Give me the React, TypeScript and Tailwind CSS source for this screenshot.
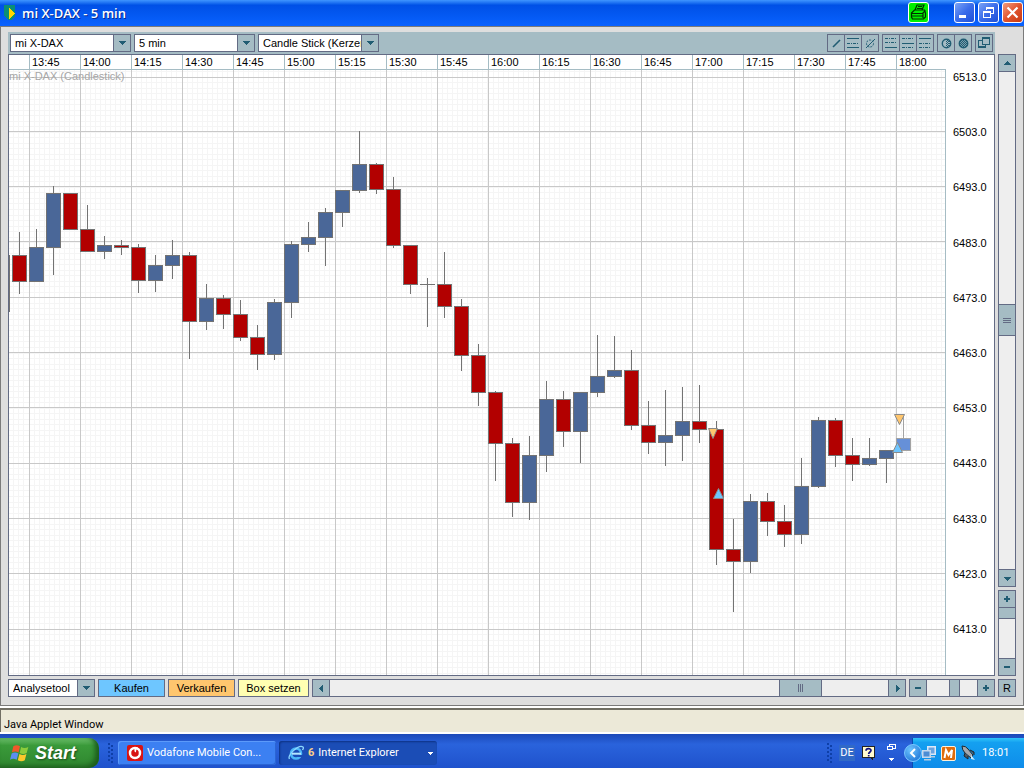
import React from "react";

type Kind = "up" | "down" | "live";
type Candle = [x: number, high: number, top: number, bottom: number, low: number, kind: Kind];

const CANDLES: Candle[] = [
  [2, 255, 255, 312, 312, "up"],
  [19, 232, 255, 282, 294, "down"],
  [36, 229, 247, 282, 282, "up"],
  [53, 186, 193, 248, 275, "up"],
  [70, 193, 193, 230, 230, "down"],
  [87, 205, 229, 252, 252, "down"],
  [104, 236, 245, 252, 259, "up"],
  [121, 240, 245, 248, 255, "down"],
  [138, 244, 247, 281, 293, "down"],
  [155, 255, 265, 281, 292, "up"],
  [172, 240, 255, 266, 279, "up"],
  [189, 252, 255, 322, 359, "down"],
  [206, 284, 298, 322, 330, "up"],
  [223, 295, 298, 315, 329, "down"],
  [240, 300, 314, 338, 341, "down"],
  [257, 325, 337, 355, 370, "down"],
  [274, 299, 302, 355, 360, "up"],
  [291, 241, 244, 303, 318, "up"],
  [308, 222, 237, 245, 252, "up"],
  [325, 208, 212, 238, 266, "up"],
  [342, 190, 190, 213, 227, "up"],
  [359, 131, 164, 191, 193, "up"],
  [376, 163, 164, 190, 194, "down"],
  [393, 177, 189, 246, 248, "down"],
  [410, 245, 245, 285, 294, "down"],
  [427, 278, 284, 285, 327, "down"],
  [444, 252, 284, 307, 318, "down"],
  [461, 299, 306, 356, 371, "down"],
  [478, 344, 355, 393, 406, "down"],
  [495, 391, 392, 444, 481, "down"],
  [512, 438, 443, 503, 517, "down"],
  [529, 436, 455, 503, 520, "up"],
  [546, 381, 399, 456, 472, "up"],
  [563, 391, 399, 432, 447, "down"],
  [580, 392, 392, 432, 463, "up"],
  [597, 335, 376, 393, 397, "up"],
  [614, 336, 370, 377, 378, "up"],
  [631, 350, 370, 426, 430, "down"],
  [648, 401, 425, 443, 454, "down"],
  [665, 390, 435, 443, 466, "up"],
  [682, 387, 421, 436, 461, "up"],
  [699, 385, 421, 430, 443, "down"],
  [716, 421, 429, 550, 565, "down"],
  [733, 519, 549, 562, 612, "down"],
  [750, 494, 501, 562, 573, "up"],
  [767, 493, 501, 522, 536, "down"],
  [784, 505, 521, 535, 547, "down"],
  [801, 458, 486, 535, 544, "up"],
  [818, 417, 420, 487, 488, "up"],
  [835, 418, 420, 456, 467, "down"],
  [852, 438, 455, 465, 481, "down"],
  [869, 438, 458, 465, 466, "up"],
  [886, 450, 450, 459, 483, "up"],
  [903, 416, 438, 451, 451, "live"],
];

const FILL: Record<Kind, string> = { up: "#4a6798", down: "#b20000", live: "#6690d8" };
const LINE: Record<Kind, string> = { up: "#737373", down: "#737373", live: "#a3a3a3" };

const TIMES = [
  "13:45", "14:00", "14:15", "14:30", "14:45", "15:00", "15:15", "15:30", "15:45",
  "16:00", "16:15", "16:30", "16:45", "17:00", "17:15", "17:30", "17:45", "18:00",
];
const PRICES = Array.from({ length: 11 }, (_, i) => (6513 - i * 10).toFixed(1));
const MAJOR_Y = [77, 131, 186, 241, 297, 352, 407, 463, 518, 573, 629];
const MAJOR_X = TIMES.map((_, i) => 29 + i * 51);
const MINOR_X = Array.from({ length: 184 }, (_, i) => Math.floor(29 + (i - 3) * 5.1));
const MINOR_Y = Array.from({ length: 112 }, (_, i) => Math.floor(77 + (i - 1) * 5.52));

function Plot() {
  return (
    <svg className="block min-h-[605px] w-full flex-1" shapeRendering="crispEdges" role="img" aria-label="mi X-DAX (Candlestick)">
      <g transform="translate(-9 -70)">
        {MINOR_X.map((x, i) => (
          <rect key={i} x={x} y={70} width={1} height={1200} fill="#f5f5f5" />
        ))}
        {MINOR_Y.map((y, i) => (
          <rect key={i} x={9} y={y} width={2400} height={1} fill="#f5f5f5" />
        ))}
        {MAJOR_X.map((x) => (
          <rect key={x} x={x} y={70} width={1} height={1200} fill="#c8c8c8" />
        ))}
        {MAJOR_Y.map((y) => (
          <rect key={y} x={9} y={y} width={2400} height={1} fill="#c8c8c8" />
        ))}
        <text x={9} y={80} fontSize={11} fill="#a6a6a6">mi X-DAX (Candlestick)</text>
        {CANDLES.map(([x, high, top, bottom, low, kind]) => (
          <g key={x}>
            <rect x={x} y={high} width={1} height={low - high} fill={LINE[kind]} />
            <rect x={x - 7} y={top} width={15} height={bottom - top} fill={LINE[kind]} />
            {bottom - top > 2 && (
              <rect x={x - 6} y={top + 1} width={13} height={bottom - top - 2} fill={FILL[kind]} />
            )}
          </g>
        ))}
        <g stroke="#8a8a8a" strokeWidth={1} shapeRendering="auto">
          <path d="M708.5 428.5h9l-4.500 10z" fill="#ffc66e" />
          <path d="M894.5 414.500h10l-5 10z" fill="#ffc66e" />
          <path d="M713.500 498.500h10l-5-10z" fill="#6ec6ff" />
          <path d="M892.500 452.500h10l-5-10z" fill="#6ec6ff" />
        </g>
      </g>
    </svg>
  );
}

function Dropdown({ label, text, className }: { label: string; text: string; className: string }) {
  return (
    <label className={`grid h-[18px] grid-cols-[minmax(0,1fr)_17px] border border-[#636b84] bg-white ${className}`}>
      <select
        aria-label={label}
        className="col-span-2 col-start-1 row-start-1 h-4 w-full appearance-none overflow-hidden bg-transparent pr-[17px] pl-1 text-[11px] leading-4 text-black outline-none"
      >
        <option>{text}</option>
      </select>
      <span className="pointer-events-none col-start-2 row-start-1 flex items-center justify-center border-l border-[#636b84] bg-[#a5bcc4]">
        <svg width="8" height="4" shapeRendering="crispEdges"><path d="M1 0h7v1H1zM2 1h5v1H2zM3 2h3v1H3zM4 3h1v1H4z" fill="#215d73" /></svg>
      </span>
    </label>
  );
}

const GLYPH: Record<string, string> = {
  up: "M4 2h1v1H4zM3 3h3v1H3zM2 4h5v1H2zM1 5h7v1H1z",
  down: "M1 3h7v1H1zM2 4h5v1H2zM3 5h3v1H3zM4 6h1v1H4z",
  left: "M5 1h1v7H5zM4 2h1v5H4zM3 3h1v3H3zM2 4h1v1H2z",
  right: "M3 1h1v7H3zM4 2h1v5H4zM5 3h1v3H5zM6 4h1v1H6z",
  plus: "M1 3h6v2H1zM3 1h2v6H3z",
  minus: "M1 3h6v2H1z",
};

function Key({ glyph, label }: { glyph: string; label: string }) {
  return (
    <button aria-label={label} className="flex size-[18px] shrink-0 items-center justify-center border border-[#636b84] bg-[#a5bcc4]">
      <svg width="8" height="8" shapeRendering="crispEdges"><path d={GLYPH[glyph]} fill="#215d73" /></svg>
    </button>
  );
}

function Tool({ label, children }: { label: string; children: React.ReactNode }) {
  return (
    <button aria-label={label} className="-ml-px flex size-[18px] items-center justify-center border border-[#636b84] bg-[#a5bcc4] first:ml-0">
      <svg width="16" height="16" className="shrink-0" shapeRendering="crispEdges" stroke="#215d73" fill="none">{children}</svg>
    </button>
  );
}

const solid = (y: number) => <path d={`M2 ${y}.5h12`} />;
const dash = (y: number) => <path d={`M2 ${y}.5h12`} strokeDasharray="3 1 1 1" />;

function Toolbar() {
  return (
    <div className="flex h-[22px] items-center gap-[3px] bg-[#a5bcc4] px-[2px]">
      <Dropdown label="Instrument" text="mi X-DAX" className="w-[121px]" />
      <Dropdown label="Intervall" text="5 min" className="w-[121px]" />
      <Dropdown label="Darstellung" text="Candle Stick (Kerzen)" className="w-[121px]" />
      <div className="ml-auto flex">
        <Tool label="Linie"><path d="M5 12l7-7" strokeWidth="1.600" shapeRendering="auto" /></Tool>
        <Tool label="Parallelen">{solid(3)}{dash(8)}{solid(12)}</Tool>
        <Tool label="Ellipse">
          <circle cx="8" cy="8.500" r="3.500" strokeDasharray="2 1" shapeRendering="auto" />
          <path d="M4 13l9-9" shapeRendering="auto" />
        </Tool>
      </div>
      <div className="flex">
        <Tool label="Linie unten">{dash(3)}{dash(7)}{solid(12)}</Tool>
        <Tool label="Linie Mitte">{dash(3)}{solid(8)}{dash(12)}</Tool>
        <Tool label="Linie oben">{solid(3)}{dash(8)}{dash(12)}</Tool>
      </div>
      <div className="flex">
        <Tool label="Halb">
          <circle cx="8.500" cy="8.500" r="4.200" strokeWidth="1.400" shapeRendering="auto" />
          <path d="M9.500 5v7M11.500 6v5" strokeDasharray="1 1" /><path d="M8.500 4v9M10.500 4v8" strokeDasharray="1 1" />
        </Tool>
        <Tool label="Voll">
          <circle cx="8.500" cy="8.500" r="4.200" strokeWidth="1.400" fill="#215d73" fillOpacity="0.300" shapeRendering="auto" />
          <path d="M5.500 6v5M7.500 4v9M9.500 4v9M11.500 6v5" strokeDasharray="1 1" />
          <path d="M6.500 5v7M8.500 5v7M10.500 5v7" strokeDasharray="1 1" />
        </Tool>
      </div>
      <div className="flex">
        <Tool label="Fenster abdocken">
          <path d="M6.500 2.500h7v7h-7zM6.500 5.500h-4v7h7v-3" /><path d="M6.500 3.500h7M2.500 11.500h7" />
        </Tool>
      </div>
    </div>
  );
}

function Chart() {
  return (
    <div className="flex min-w-0 border border-[#636b84] bg-white">
      <div className="flex min-w-0 flex-1 flex-col">
        <div className="flex h-[15px] overflow-hidden border-b border-[#a5bcc4] text-[11px] leading-[14px]">
          <span className="w-5 shrink-0" />
          {TIMES.map((t) => (
            <span key={t} className="w-[51px] shrink-0 border-l border-[#a5bcc4] pl-[2px]">{t}</span>
          ))}
        </div>
        <div className="flex flex-1 flex-col border-r border-[#a5bcc4]"><Plot /></div>
      </div>
      <div className="flex h-[581px] w-12 shrink-0 flex-col justify-between pt-[15px] pl-[7px] text-[11px] leading-[14px]">
        {PRICES.map((p) => (
          <span key={p}>{p}</span>
        ))}
      </div>
    </div>
  );
}

function SideBars() {
  return (
    <div className="flex w-[18px] flex-col gap-[3px]">
      <div className="flex flex-1 flex-col bg-[#eee]">
        <Key glyph="up" label="Nach oben" />
        <div className="grow-[232] border-x border-[#636b84]" />
        <div className="flex h-8 flex-col items-center justify-center gap-px border border-[#636b84] bg-[#a5bcc4]">
          <i className="h-px w-2 bg-[#636b84]" /><i className="h-px w-2 bg-[#636b84]" /><i className="h-px w-2 bg-[#636b84]" />
        </div>
        <div className="grow-[233] border-x border-[#636b84]" />
        <Key glyph="down" label="Nach unten" />
      </div>
      <div className="flex h-[86px] flex-col bg-[#eee]">
        <Key glyph="plus" label="Vertikal vergrößern" />
        <div className="h-[11px] border border-t-0 border-[#636b84] bg-[#a5bcc4]" />
        <div className="flex-1 border-x border-[#636b84]" />
        <Key glyph="minus" label="Vertikal verkleinern" />
      </div>
    </div>
  );
}

function BottomBar() {
  return (
    <div className="col-span-2 flex h-[18px] gap-[3px] text-[11px] leading-4 text-black">
      <Dropdown label="Analyse" text="Analysetool" className="w-[87px]" />
      <button className="w-[67px] border border-[#636b84] bg-[#6ec6ff]">Kaufen</button>
      <button className="w-[67px] border border-[#636b84] bg-[#ffc66e]">Verkaufen</button>
      <button className="w-[71px] border border-[#636b84] bg-[#ffffb2]">Box setzen</button>
      <div className="flex flex-1 bg-[#eee]">
        <Key glyph="left" label="Nach links" />
        <div className="grow-[449] border-y border-[#636b84]" />
        <div className="flex w-[43px] items-center justify-center gap-px border border-[#636b84] bg-[#a5bcc4]">
          <i className="h-2 w-px bg-[#636b84]" /><i className="h-2 w-px bg-[#636b84]" /><i className="h-2 w-px bg-[#636b84]" />
        </div>
        <div className="grow-[66] border-y border-[#636b84]" />
        <Key glyph="right" label="Nach rechts" />
      </div>
      <div className="flex w-[86px] bg-[#eee]">
        <Key glyph="minus" label="Horizontal verkleinern" />
        <div className="grow-[22] border-y border-[#636b84]" />
        <div className="w-[11px] border border-[#636b84] bg-[#a5bcc4]" />
        <div className="grow-[17] border-y border-[#636b84]" />
        <Key glyph="plus" label="Horizontal vergrößern" />
      </div>
      <button className="w-[18px] border border-[#636b84] bg-[#a5bcc4]">R</button>
    </div>
  );
}

function TitleBar() {
  return (
    <header className="flex h-[26px] items-center bg-linear-to-b from-[#3f95ff] from-0% via-[#0050e6] via-20% to-[#0a62ff] pr-px pb-px pl-1">
      <svg width="12" height="16" shapeRendering="crispEdges" className="mt-px">
        <path d="M0 0h11v11l-4 4H4l-4-4z" fill="#0b8e76" />
        <path d="M5 3l6 5-6 6z" fill="#ffd800" />
      </svg>
      <h1 className="ml-1.5 font-[Open_Sans,sans-serif] text-[13px] leading-5 font-semibold text-white [text-shadow:1px_1px_#0a2a90]">mi X-DAX - 5 min</h1>
      <button aria-label="Drucken" className="ml-auto flex size-[21px] items-center justify-center rounded-[3px] border border-white bg-[#00f000]">
        <svg width="19" height="19" fill="none" stroke="#002c00" strokeWidth="1.200" className="shrink-0">
          <path d="M6 7l2-5h7l-2 5M9 3.500h4M8 5.500h5M2.500 10l3-3h10l1 3v4l-2 2h-11l-1-2zM2.500 10.500h11l3-3M3 13h11M14 10.500V15" />
        </svg>
      </button>
      <div className="ml-[25px] flex gap-[3px]">
        <button aria-label="Minimieren" className="size-[21px] rounded-[3px] border border-white bg-linear-to-br from-[#7ba2f5] via-[#3a6cea] to-[#1d50d8]">
          <svg width="19" height="19"><path d="M4 12h7v3H4z" fill="#fff" /></svg>
        </button>
        <button aria-label="Wiederherstellen" className="size-[21px] rounded-[3px] border border-white bg-linear-to-br from-[#7ba2f5] via-[#3a6cea] to-[#1d50d8]">
          <svg width="19" height="19" fill="none" stroke="#fff" shapeRendering="crispEdges">
            <path d="M7.500 7V4.500h7v6H12M7 5.500h8M4.500 8.500h7v6h-7zM4 9.500h8" />
          </svg>
        </button>
        <button aria-label="Schließen" className="size-[21px] rounded-[3px] border border-white bg-linear-to-br from-[#f09a7c] via-[#e0532c] to-[#c83a10]">
          <svg width="19" height="19" stroke="#fff" strokeWidth="2.200"><path d="M4.500 4.500l10 10M14.500 4.500l-10 10" /></svg>
        </button>
      </div>
    </header>
  );
}

function Grip() {
  return (
    <svg width="6" height="22" shapeRendering="crispEdges" className="shrink-0">
      {[1, 5, 9, 13, 17].map((y) => (
        <g key={y} fill="#0e3fa8"><rect x="0" y={y} width="2" height="2" /><rect x="3" y={y + 2} width="2" height="2" /></g>
      ))}
    </svg>
  );
}

function TaskBar() {
  return (
    <footer className="flex h-[34px] items-end bg-linear-to-b from-[#1c49b8] from-0% via-[#2a63dc] via-30% to-[#1f52cc] font-[Roboto,sans-serif] text-[11px] text-white">
      <button className="flex h-[30px] w-[99px] items-center rounded-r-[10px] bg-linear-to-b from-[#6bbf6b] from-0% via-[#3a9a3a] via-25% to-[#2f862f] pl-[10px] shadow-[inset_-4px_-2px_5px_#1c5c1c]">
        <svg width="20" height="20" viewBox="0 0 18 18">
          <path d="M3 3q3-2 6 0L7.700 8.500q-3-1.800-6 0z" fill="#f0582a" />
          <path d="M10 3.500q3 1.800 6.500 0L15 9q-3 1.800-6.300 0z" fill="#8ccc3c" />
          <path d="M1.500 9.500q3-2 6 0L6 15q-3-1.800-6 0z" fill="#5c8ef0" />
          <path d="M8.500 10q3 1.800 6.300 0l-1.500 5.500q-3 1.800-6.300 0z" fill="#fcc82c" />
        </svg>
        <span className="ml-[5px] font-[Liberation_Sans,sans-serif] text-[18px] leading-6 font-bold italic [text-shadow:1px_1px_2px_#1a4a1a]">Start</span>
      </button>
      <div className="flex h-[30px] min-w-0 flex-1 items-center gap-[3px] pl-[9px]">
        <Grip />
        <button className="ml-px flex h-6 w-[158px] items-center rounded-[3px] bg-[#3c80f2] pl-[9px] shadow-[inset_1px_1px_#5c9afa,inset_-1px_-1px_#2b65d4]">
          <svg width="16" height="16" className="shrink-0">
            <rect width="16" height="16" rx="2" fill="#d81414" />
            <circle cx="8" cy="8" r="5" fill="none" stroke="#fff" strokeWidth="2.500" />
            <path d="M10 2c-2 .5-3 2-2.500 4.500l1.500 1C9 5 9.500 4 11 3z" fill="#fff" />
          </svg>
          <span className="ml-1 whitespace-nowrap">Vodafone Mobile Con...</span>
        </button>
        <button className="flex h-6 w-[158px] items-center rounded-[3px] bg-[#1b4db6] pl-[9px] shadow-[inset_1px_1px_2px_#0d3284]">
          <svg width="16" height="16" className="shrink-0" fill="none">
            <circle cx="8" cy="8.500" r="5" stroke="#4cb8f8" strokeWidth="2.600" />
            <path d="M4 8.700h9" stroke="#b4e6ff" strokeWidth="2" />
            <path d="M10 11h5" stroke="#1b4db6" strokeWidth="2" />
            <path d="M1.500 14C-1 10 11-1 15 2c1 1 0 2-.5 3" stroke="#8cd8ff" strokeWidth="1.300" />
          </svg>
          <b className="ml-1 text-[#ffd08a]">6</b>
          <span className="ml-1 whitespace-nowrap">Internet Explorer</span>
          <svg width="5" height="3" className="mr-1 ml-auto" shapeRendering="crispEdges"><path d="M0 0h5v1H0zM1 1h3v1H1zM2 2h1v1H2z" fill="#fff" /></svg>
        </button>
      </div>
      <div className="flex h-[30px] items-center">
        <Grip />
        <span className="ml-[6px] flex h-4 w-4 items-center justify-center bg-[#3169c6]">DE</span>
        <svg width="14" height="16" className="ml-[7px]">
          <path d="M0 1h13v12h-2v3l-3-3H0z" fill="#222" shapeRendering="crispEdges" />
          <path d="M1 2h11v10H1z" fill="#fffbd0" shapeRendering="crispEdges" />
          <path d="M4 5.800C4 3 9.200 3 9 5.500 9 7 6.700 7 6.700 9M6.700 10v1.600" stroke="#101080" strokeWidth="1.700" fill="none" />
        </svg>
        <svg width="9" height="20" className="ml-[11px]" shapeRendering="crispEdges" fill="none" stroke="#fff">
          <path d="M2.500 4V1.500h6v4H6M.5 3.500h5v3h-5z" />
          <path d="M2 15.500h5M3 16.500h3M4 17.500h1" />
        </svg>
      </div>
      <div className="ml-4 flex h-[30px] w-[112px] shrink-0 items-center border-l border-[#0c4cb0] bg-linear-to-b from-[#30c4f8] from-0% via-[#14a0f0] via-15% to-[#0f8cea]">
        <button aria-label="Ausgeblendete Symbole" className="-ml-[9px] flex size-[18px] shrink-0 items-center justify-center rounded-full border border-[#7cc8ff] bg-[radial-gradient(circle_at_35%_30%,#6cc4ff,#1268d0)]">
          <svg width="8" height="10" fill="none" stroke="#fff" strokeWidth="2"><path d="M6 1L2 5l4 4" /></svg>
        </button>
        <svg width="15" height="15" className="shrink-0">
          <path d="M5 0h9v9H5z" fill="#dbe8f8" /><path d="M6.500 1.500h6v6h-6z" fill="#6ca4e0" />
          <path d="M0 4h9v8H0z" fill="#c4d8ee" /><path d="M1.500 5.500h6v5h-6z" fill="#4c8cd4" />
          <path d="M2 13h7v1.500H2zM9 10h4v1.500H9z" fill="#b8cce0" />
        </svg>
        <svg width="15" height="15" className="ml-[4px] shrink-0">
          <rect x=".5" y=".5" width="14" height="14" rx="1.500" fill="#e06c0c" stroke="#fff0d8" />
          <path d="M3.500 12L5 4l2.500 5L11 4l-1 8" fill="none" stroke="#fff" strokeWidth="2" />
        </svg>
        <svg width="15" height="16" className="ml-[5px] shrink-0">
          <path d="M1 1q4 0 6 3l5 6-2 3-6-5Q1 5 1 1z" fill="#a4a8ae" stroke="#1c2830" />
          <path d="M4 8l-1 3 4 3v-3M9 5l4 2v3" fill="#505860" stroke="#1c2830" />
          <path d="M10 10l4 5-4-1z" fill="#c8ecff" />
        </svg>
        <time className="ml-[6px]">18:01</time>
      </div>
    </footer>
  );
}

export default function App() {
  return (
    <div className="flex min-h-screen flex-col bg-[#ece9d8] font-[Liberation_Sans,Arial,sans-serif] text-black">
      <TitleBar />
      <main className="grid flex-1 grid-cols-[minmax(0,1fr)_18px] grid-rows-[22px_1fr_auto] gap-x-[3px] border border-[#7b7b7b] bg-[#dedede] px-[7px] pt-[5px] pb-2">
        <Toolbar />
        <span />
        <Chart />
        <SideBars />
        <div className="col-span-2 pt-[3px]"><BottomBar /></div>
      </main>
      <div className="h-7 border-b border-[#fff] bg-white pt-[2px] pb-px">
        <p className="h-full border-t-2 border-l border-[#716f64] bg-[#ece9d8] pt-[7px] pl-[3px] font-[Roboto,sans-serif] text-[11px] leading-4">Java Applet Window</p>
      </div>
      <TaskBar />
    </div>
  );
}
